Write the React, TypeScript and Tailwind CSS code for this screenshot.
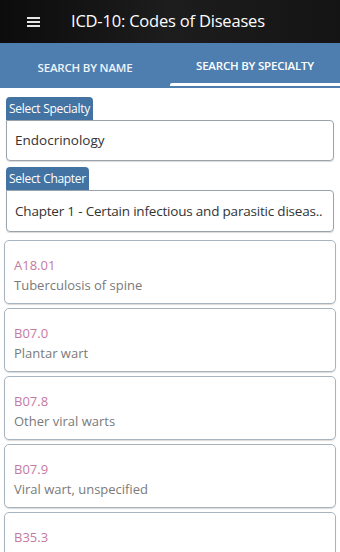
import React from "react";

const items = [
  { code: "A18.01", desc: "Tuberculosis of spine" },
  { code: "B07.0", desc: "Plantar wart" },
  { code: "B07.8", desc: "Other viral warts" },
  { code: "B07.9", desc: "Viral wart, unspecified" },
  { code: "B35.3", desc: "" },
];

export default function App() {
  return (
    <div
      className="w-[340px] h-[552px] overflow-hidden bg-white"
      style={{ fontFamily: '"Open Sans", "Noto Sans", sans-serif' }}
    >
      <div className="h-[43px] flex items-center bg-gradient-to-r from-[#0c0c0c] via-[#1d1d1d] to-[#141414]">
        <div className="ml-[27px] flex flex-col gap-[2px] w-[13px]">
          <div className="h-[2px] bg-[#e6e6e6]" />
          <div className="h-[2px] bg-[#e6e6e6]" />
          <div className="h-[2px] bg-[#e6e6e6]" />
        </div>
        <div className="ml-[31px] text-[16.5px] text-white tracking-[-0.2px]">
          ICD-10: Codes of Diseases
        </div>
      </div>
      <div className="h-[45px] bg-[#4d7eaf] flex relative">
        <div className="w-[170px] flex items-center justify-center pt-[4px] text-[11.5px] font-semibold text-[#eef3f8] tracking-[-0.2px]">
          SEARCH BY NAME
        </div>
        <div className="w-[170px] flex flex-col">
          <div className="flex-1 flex items-center justify-center pt-[5px] text-[11.5px] font-semibold text-white tracking-[-0.2px]">
            SEARCH BY SPECIALTY
          </div>
          <div className="h-[3px] bg-white rounded-tl-[2px] mb-[2px]" />
        </div>
      </div>
      <div className="px-[6px] pt-[7px]">
        <div className="inline-block bg-[#4373a3] text-white text-[12px] px-[3px] h-[23px] leading-[23px] rounded-t-[4px] tracking-[-0.3px]">
          Select Specialty
        </div>
        <div className="h-[41px] border border-[#9aa3ab] rounded-[4px] rounded-tl-none flex items-center px-[8px] text-[13.5px] text-[#333] shadow-[0_1px_1px_rgba(0,0,0,0.15)]">
          Endocrinology
        </div>
        <div className="mt-[6px] inline-block bg-[#4373a3] text-white text-[12px] px-[3px] h-[23px] leading-[23px] rounded-t-[4px] tracking-[-0.3px]">
          Select Chapter
        </div>
        <div className="h-[42px] border border-[#9aa3ab] rounded-[4px] rounded-tl-none flex items-center px-[8px] text-[13.5px] text-[#333] whitespace-nowrap overflow-hidden tracking-[-0.2px] shadow-[0_1px_1px_rgba(0,0,0,0.15)]">
          Chapter 1 - Certain infectious and parasitic diseas..
        </div>
      </div>
      <div className="px-[4px] pt-[8px] flex flex-col gap-[4px]">
        {items.map((it) => (
          <div
            key={it.code}
            className="h-[64px] shrink-0 border border-[#a7b4bf] rounded-[5px] px-[9px] pt-[14px] flex flex-col shadow-[0_1px_1px_rgba(0,0,0,0.15)]"
          >
            <div className="text-[13px] text-[#c57aa2] leading-[20px]">{it.code}</div>
            <div className="text-[13px] text-[#7a7a7a] leading-[20px] h-[20px]">{it.desc}</div>
          </div>
        ))}
      </div>
    </div>
  );
}
